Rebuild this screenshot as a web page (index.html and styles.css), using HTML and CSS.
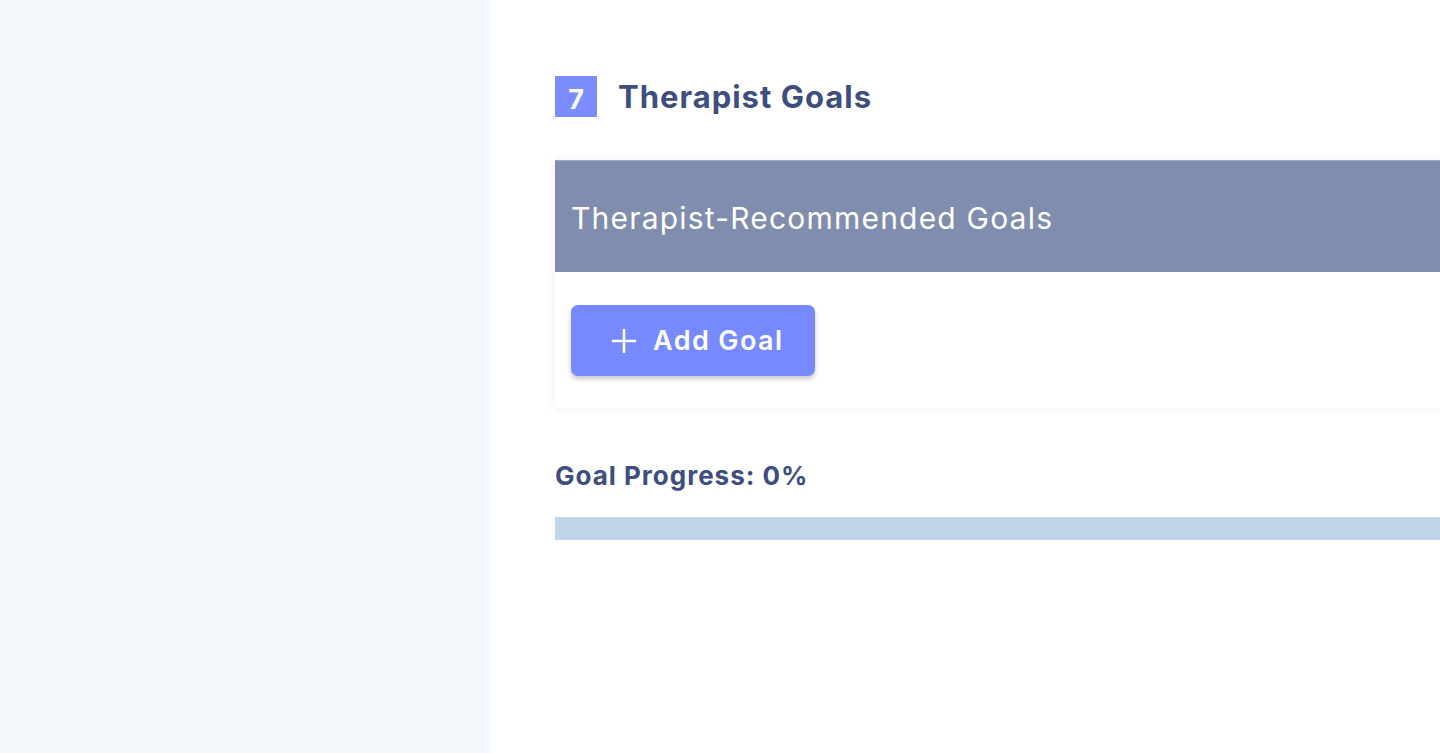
FILE: index.html
```html
<!DOCTYPE html>
<html>
<head>
<meta charset="utf-8">
<link rel="stylesheet" href="styles.css">
</head>
<body>
<div class="layout">
  <aside class="sidebar"></aside>
  <main class="main">
    <div class="content">
      <div class="section-head">
        <div class="badge">7</div>
        <h2 class="section-title">Therapist Goals</h2>
      </div>
      <div class="card">
        <div class="card-header">Therapist-Recommended Goals</div>
        <div class="card-body">
          <button class="btn-add">
            <svg class="plus" width="26" height="26" viewBox="0 0 26 26"><path d="M13 1v24M1 13h24" stroke="#fff" stroke-width="2.6" fill="none"/></svg>
            <span>Add Goal</span>
          </button>
        </div>
      </div>
      <div class="progress-label">Goal Progress: 0%</div>
      <div class="progress-track"><div class="progress-fill" style="width:0%"></div></div>
    </div>
  </main>
</div>
</body>
</html>
```
FILE: styles.css
```css
* { box-sizing: border-box; }
html, body { margin: 0; padding: 0; height: 100%; }
body { font-family: "Inter", "Open Sans", sans-serif; background: #fff; overflow: hidden; }
.layout { display: flex; height: 753px; }
.sidebar { width: 490px; flex: 0 0 490px; background: #f4f8fd; }
.main { flex: 1; overflow: hidden; padding: 76px 0 0 65px; }
.content { width: 1200px; }
.section-head { display: flex; align-items: center; gap: 21px; height: 41px; }
.badge { width: 42px; height: 41px; background: #7b8cff; color: #fff; font-weight: 700; font-size: 27px; display: flex; align-items: center; justify-content: center; padding-top: 6px; }
.section-title { margin: 0; font-size: 31px; font-weight: 700; color: #3d4e7f; letter-spacing: 1px; }
.card { margin-top: 43px; background: #fff; box-shadow: 0 0 10px rgba(0,0,0,0.08); }
.card-header { height: 112px; background: #808dae; color: #fff; font-size: 30px; font-weight: 400; display: flex; align-items: center; padding: 2px 16px 0; border-top: 1px solid #9fa6bf; letter-spacing: 1.2px; }
.card-body { padding: 33px 16px 32px; }
.btn-add { display: flex; align-items: center; gap: 16px; width: 244px; height: 71px; border: none; border-radius: 7px; background: #7789ff; color: #fff; font-family: inherit; font-size: 27px; font-weight: 600; padding: 0 0 0 40px; box-shadow: 0 3px 5px rgba(0,0,0,0.22); letter-spacing: 1.4px; }
.plus { flex: 0 0 auto; }
.progress-label { margin-top: 52px; font-size: 26px; font-weight: 700; color: #3d4e7f; letter-spacing: 1px; }
.progress-track { margin-top: 26px; height: 23px; background: #c2d4ec; }
.progress-fill { height: 100%; background: #7789ff; }
```
